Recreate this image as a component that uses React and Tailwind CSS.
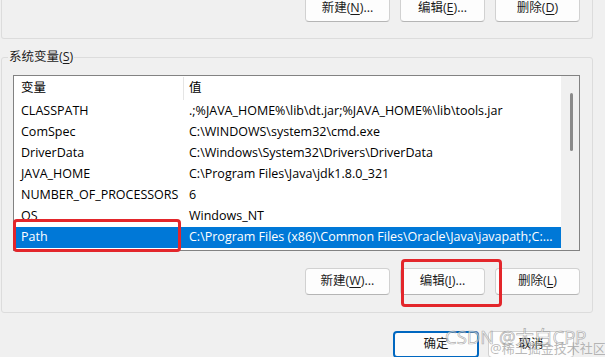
const FONT = "font-['Open_Sans','Noto_Sans_CJK_SC',sans-serif]";

const rows = [
  ["CLASSPATH", ".;%JAVA_HOME%\\lib\\dt.jar;%JAVA_HOME%\\lib\\tools.jar"],
  ["ComSpec", "C:\\WINDOWS\\system32\\cmd.exe"],
  ["DriverData", "C:\\Windows\\System32\\Drivers\\DriverData"],
  ["JAVA_HOME", "C:\\Program Files\\Java\\jdk1.8.0_321"],
  ["NUMBER_OF_PROCESSORS", "6"],
  ["OS", "Windows_NT"],
  ["Path", "C:\\Program Files (x86)\\Common Files\\Oracle\\Java\\javapath;C:..."],
];

function Btn({ label, k, tail = "", primary = false, className = "" }) {
  return (
    <button
      className={
        "h-[27px] w-[85px] shrink-0 rounded-[4px] text-[12.5px] text-[#1b1b1b] flex items-center justify-center " +
        (primary
          ? "border-2 border-[#0067c0] bg-[#fdfdfd] "
          : "border border-[#d1d1d1] border-b-[#b5b5b5] bg-[#fdfdfd] ") +
        className
      }
    >
      {label}
      {k && (
        <>
          (<span className="underline underline-offset-2">{k}</span>)
        </>
      )}
      {tail}
    </button>
  );
}

export default function App() {
  return (
    <div className={`relative w-[605px] h-[357px] overflow-hidden bg-[#f0f0f0] ${FONT}`}>
      {/* user variables group (bottom part) */}
      <div className="ml-[1px] w-[592px] h-[39px] border-x border-b border-[#dcdcdc] rounded-b-[3px] flex justify-end gap-[10px] pr-[12px]">
        <Btn label="新建" k="N" tail="..." className="-mt-[5px] h-[26px]" />
        <Btn label="编辑" k="E" tail="..." className="-mt-[5px] h-[26px]" />
        <Btn label="删除" k="D" className="-mt-[5px] h-[26px]" />
      </div>

      {/* system variables group */}
      <fieldset className="mt-[10px] ml-[1px] w-[592px] h-[264px] border border-[#dcdcdc] rounded-[3px]">
        <legend className="ml-[6px] px-px text-[12.5px] leading-[16px] text-[#1b1b1b]">
          系统变量(<span className="underline underline-offset-2">S</span>)
        </legend>

        <div className="mt-[10px] ml-[11px] w-[567px] h-[176px] border border-[#828282] bg-white flex text-[12.5px] text-black">
          <div className="flex-1 min-w-0 flex flex-col">
            <div className="h-[25px] flex shrink-0">
              <div className="w-[170px] shrink-0 pl-[7px] flex items-center border-r border-[#e5e5e5] my-[1px]">变量</div>
              <div className="pl-[5px] flex items-center">值</div>
            </div>
            {rows.map(([n, v], i) => {
              const sel = i === rows.length - 1;
              return (
                <div
                  key={n}
                  className={
                    "h-[21px] flex items-center whitespace-nowrap overflow-hidden shrink-0 " +
                    (sel ? "bg-[#0078d7] text-white" : "")
                  }
                >
                  <div className="w-[170px] shrink-0 pl-[7px]">{n}</div>
                  <div className="pl-[5px]">{v}</div>
                </div>
              );
            })}
          </div>
          <div className="w-[18px] shrink-0 bg-[#f0f0f0] flex justify-center pt-[17px]">
            <div className="w-[3px] h-[58px] rounded-full bg-[#8a8a8a] ml-[2px]" />
          </div>
        </div>

        <div className="mt-[17px] flex justify-end gap-[10px] pr-[12px]">
          <Btn label="新建" k="W" tail="..." />
          <Btn label="编辑" k="I" tail="..." />
          <Btn label="删除" k="L" />
        </div>
      </fieldset>

      {/* dialog buttons */}
      <div className="mt-[18px] flex justify-end gap-[9px] pr-[31px]">
        <Btn label="确定" primary className="w-[86px]" />
        <Btn label="取消" className="w-[86px]" />
      </div>

      {/* annotation boxes */}
      <div className="absolute left-[13px] top-[219px] w-[168px] h-[33px] border-[3px] border-[#e3262b] rounded-[4px]" />
      <div className="absolute left-[401px] top-[259px] w-[101px] h-[48px] border-[3px] border-[#e3262b] rounded-[4px]" />

      {/* watermark */}
      <div className="absolute left-[445px] top-[326px] text-[18.5px] leading-[22px] text-white/60 [-webkit-text-stroke:0.7px_rgba(110,110,110,0.55)] whitespace-nowrap">
        CSDN @太白CPP
      </div>
      <div className="absolute left-[490px] top-[340px] text-[13px] leading-[16px] text-[#9a9a9a]/70 whitespace-nowrap">
        @稀土掘金技术社区
      </div>
    </div>
  );
}
